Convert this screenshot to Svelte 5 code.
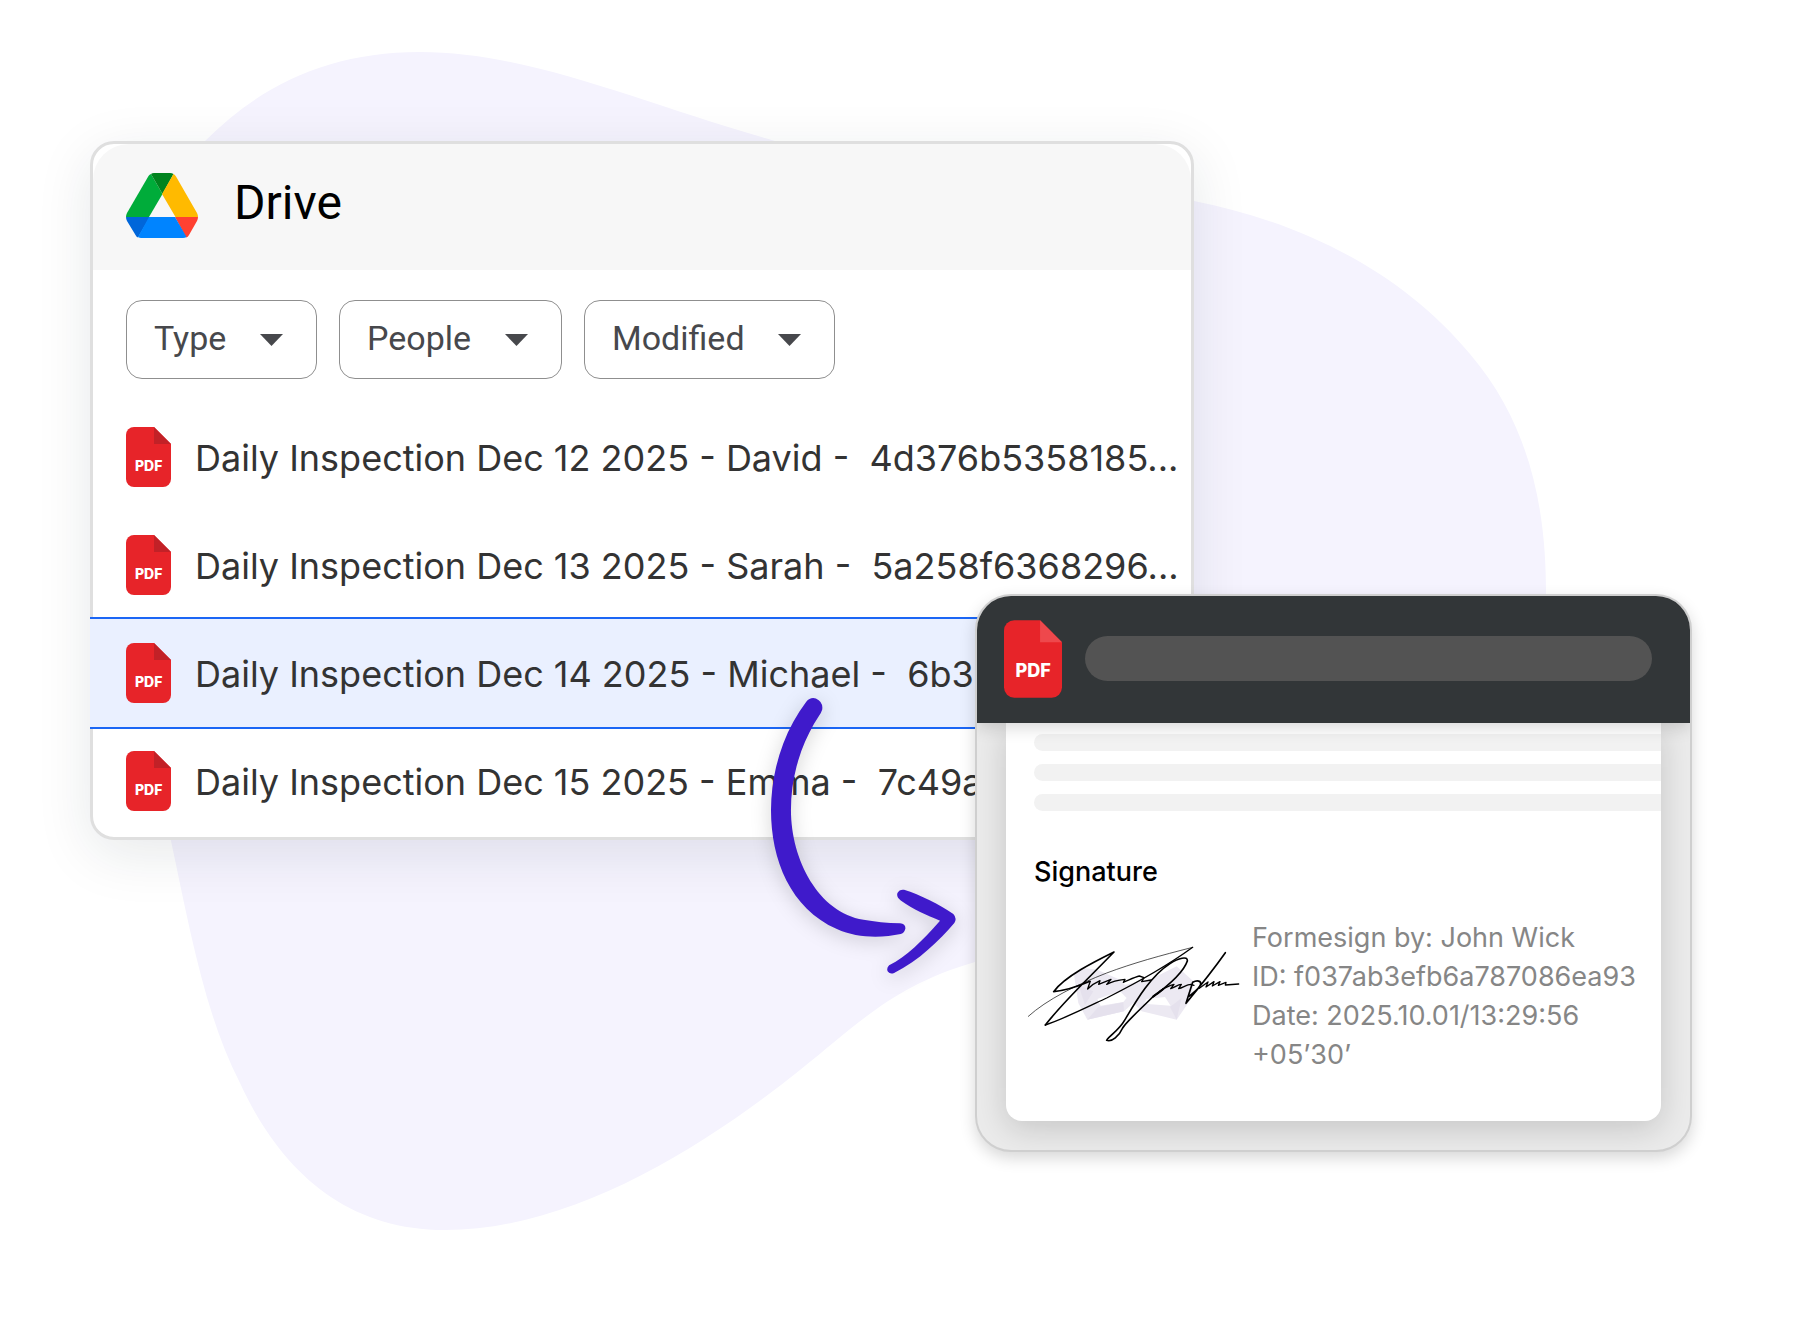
<script>
  const filters = ['Type', 'People', 'Modified'];
  const files = [
    { name: 'Daily Inspection Dec 12 2025 - David -  4d376b5358185...' },
    { name: 'Daily Inspection Dec 13 2025 - Sarah -  5a258f6368296...' },
    { name: 'Daily Inspection Dec 14 2025 - Michael -  6b3', selected: true },
    { name: 'Daily Inspection Dec 15 2025 - Emma -  7c49a' }
  ];
  const details = [
    'Formesign by: John Wick',
    'ID: f037ab3efb6a787086ea93',
    'Date: 2025.10.01/13:29:56',
    '+05’30’'
  ];
</script>

{#snippet pdf(kind)}
  <svg class="pdf {kind}" viewBox="0 0 45 60" role="img" aria-label="PDF file">
    <path fill="#e72429" d="M8 0H28L45 17V52a8 8 0 0 1-8 8H8a8 8 0 0 1-8-8V8a8 8 0 0 1 8-8Z" />
    <path class="fold" d="M28 0V17H45Z" />
    <text x="22.7" y="44.3" text-anchor="middle">PDF</text>
  </svg>
{/snippet}

<main>
  <svg class="blob" viewBox="0 0 1800 1335" aria-hidden="true">
    <path
      fill="#f5f3fe"
      d="M420 52C330 52 262 84 205 141C130 215 130 400 140 600C148 700 156 760 171 841C190 930 205 1015 240 1083C280 1170 345 1230 445 1230C570 1230 700 1150 800 1070C860 1022 895 985 975 962C1100 925 1250 900 1380 800C1500 700 1546 640 1546 594C1546 520 1535 430 1470 354C1400 270 1300 222 1194 201C1050 190 900 175 775 141C640 103 530 52 420 52Z"
    />
  </svg>

  <section class="drive">
    <header>
      <svg class="logo" viewBox="0 0 72 65" role="img" aria-label="Drive logo">
        <path fill="#0066da" d="M0 44H24L12 64.500Q10.500 64 9.500 62L1 48Q0 46 0 44Z" />
        <path fill="#00ac3a" d="M36.500 21L25 1Q23.500 1.500 22.500 3L1 40Q0 42 0 44H23Z" />
        <path fill="#ff4131" d="M60 64.500Q62 64 63 62L71 48Q72 46 72 44H49Z" />
        <path fill="#00831e" d="M36.500 21L47.500 1Q46 0 44 0H28Q26 0 25 1Z" />
        <path fill="#0084ff" d="M49 44H23L12 64Q13.500 65 15 65H57Q59 65 60.500 64Z" />
        <path fill="#ffba00" d="M71 40L50 3.500Q49 1.500 47.500 1L36 21L49.500 44H72Q72 42 71 40Z" />
      </svg>
      <h1>Drive</h1>
    </header>

    <div class="filters">
      {#each filters as filter}
        <div class="filter">
          <select aria-label={filter}>
            <option>{filter}</option>
          </select>
          <svg viewBox="0 0 23 12" aria-hidden="true"><path fill="#47484c" d="M0 0H23L11.500 12Z" /></svg>
        </div>
      {/each}
    </div>

    <ul>
      {#each files as file}
        <li class:selected={file.selected}>
          <a href="#file">{@render pdf('small')}<span>{file.name}</span></a>
        </li>
      {/each}
    </ul>
  </section>

  <div class="preview-wrap">
    <section class="preview">
      <header>
        {@render pdf('large')}
        <div class="title-bar"></div>
      </header>
      <div class="body">
        <article>
          <div class="line"></div>
          <div class="line"></div>
          <div class="line"></div>
          <h2>Signature</h2>
          <div class="signed">
            <svg class="signature" viewBox="48 70 642 306" role="img" aria-label="Handwritten signature">
              <g fill="#ece9f2">
                <path d="M192 165L215 144L262 150L330 180L345 196L385 185L430 175L500 140L550 185L545 235L500 300L395 275L370 250L342 275L232 300L205 250Z" />
              </g>
              <path fill="#fff" d="M272 258L262 238L330 215L350 235L340 247ZM402 252L410 238L465 232L482 258Z" />
              <path fill="#e5e1ed" d="M265 262L340 248L342 275L232 300ZM480 262L500 300L515 235ZM205 195L250 215L225 255Z" />
              <g fill="none" stroke="#000" stroke-linejoin="round" stroke-linecap="round">
                <path stroke-width="2" d="M55 290C110 240 200 195 290 160C370 130 450 108 548 83" />
                <path stroke-width="4" d="M548 83C470 140 380 190 290 235C220 268 160 298 106 316" />
                <path stroke-width="5" d="M106 316C150 260 205 205 250 160L312 97C255 125 165 170 131 216C165 213 205 200 240 185" />
                <path stroke-width="4" d="M240 187L233 208C244 197 256 189 270 183L266 194L303 179L290 194C305 186 325 181 345 179L340 188C355 182 375 172 388 169L402 174L395 186L424 181" />
                <path stroke-width="5" d="M428 232C465 205 520 160 532 124C534 108 505 115 480 132C420 170 375 250 345 300C325 335 300 345 290 362C305 368 328 348 338 325C350 305 390 270 428 232" />
                <path stroke-width="6" d="M430 230L460 208L442 222" />
                <path stroke-width="4" d="M450 214C462 206 480 197 492 194L482 207C494 203 504 194 514 194L506 207C518 204 532 194 542 194L552 197" />
                <path stroke-width="5" d="M646 99C610 150 570 200 528 251L548 188C562 180 574 184 572 194C568 208 550 219 538 229" />
                <path stroke-width="4" d="M568 206L594 187L588 202L612 186L607 199L630 186L625 197L648 188L646 196L686 193" />
              </g>
            </svg>
            <p>
              {#each details as detail}
                <span>{detail}</span>
              {/each}
            </p>
          </div>
        </article>
      </div>
    </section>

    <svg class="arrow" viewBox="80 100 580 860" aria-hidden="true">
      <path
        fill="#3f1acb"
        d="M198 125Q210 110 227 115Q249 125 246 148Q243 158 236 168C185 245 152 345 152 450C152 600 235 758 370 780Q420 789 480 791Q496 792 496 806Q494 820 482 823C425 835 350 836 290 808C150 745 92 600 92 450C93 330 130 215 198 125Z"
      />
      <path
        fill="#3f1acb"
        d="M492 690C540 705 600 735 640 763Q652 776 643 790C600 840 535 905 462 940Q450 945 443 936Q438 926 447 917C500 890 545 845 600 783C560 765 520 750 482 722Q468 712 472 700Q478 688 492 690Z"
      />
    </svg>
  </div>
</main>

<style>
  :global(body) {
    margin: 0;
    background: #fff;
  }

  main {
    position: relative;
    box-sizing: border-box;
    min-height: 100vh;
    padding: 141px 0;
    display: grid;
    grid-template-columns: 90fr 885fr 219fr 498fr 108fr;
    align-items: start;
    overflow: hidden;
    font-family: Inter, 'Liberation Sans', sans-serif;
  }

  .blob {
    position: absolute;
    top: 0;
    left: 0;
    width: 100%;
  }

  h1,
  h2,
  p,
  ul {
    margin: 0;
    padding: 0;
  }

  .drive {
    position: relative;
    grid-area: 1 / 2 / 2 / 4;
    min-width: 0;
    border: 3px solid #dfdfdf;
    border-radius: 24px;
    background: #fff;
    box-shadow: 0 14px 56px rgba(20, 40, 50, 0.1);
  }

  .drive header {
    display: flex;
    box-sizing: border-box;
    align-items: center;
    gap: 36px;
    height: 126px;
    padding: 0 33px 4px;
    border-radius: 36px 36px 0 0;
    background: #f7f7f7;
  }

  .logo {
    width: 72px;
    height: 65px;
  }

  h1 {
    font: 400 48px/64px Roboto, sans-serif;
    padding-bottom: 4px;
    color: #000;
  }

  .filters {
    display: flex;
    gap: 22px;
    padding: 30px 33px 24px;
  }

  .filter {
    position: relative;
  }

  select {
    appearance: none;
    box-sizing: border-box;
    height: 79px;
    margin: 0;
    padding: 0 89px 4px 27px;
    border: 1px solid #8f8f8f;
    border-radius: 16px;
    background: #fff;
    color: #47484c;
    font: 400 34px/40px Roboto, sans-serif;
  }

  .filter svg {
    position: absolute;
    right: 34px;
    top: 34px;
    width: 23px;
    height: 12px;
    pointer-events: none;
  }

  ul {
    list-style: none;
    padding-bottom: 2px;
  }

  li {
    height: 108px;
  }

  li.selected {
    position: relative;
    margin: -2px 0 -2px -3px;
    padding-left: 3px;
    border: solid #1b66f5;
    border-width: 2px 0;
    background: #eaf0ff;
  }

  li a {
    display: flex;
    align-items: center;
    gap: 24px;
    height: 100%;
    padding-left: 33px;
    color: #333;
    font-size: 36px;
    line-height: 48px;
    text-decoration: none;
    white-space: pre;
  }

  li span {
    padding-top: 2px;
  }

  .pdf {
    flex: none;
  }

  .pdf text {
    fill: #fff;
    font: 800 14px Inter, sans-serif;
  }

  .small {
    width: 45px;
    height: 60px;
  }

  .small .fold {
    fill: #c22127;
  }

  .large {
    width: 58px;
    height: 78px;
  }

  .large .fold {
    fill: #ee484c;
  }

  .preview-wrap {
    position: relative;
    grid-area: 1 / 3 / 2 / 5;
    margin-top: 453px;
  }

  .preview {
    border: 2px solid #cfcfcf;
    border-radius: 36px;
    overflow: hidden;
    background: #ebebeb;
    box-shadow: 0 6px 16px rgba(0, 0, 0, 0.16);
  }

  .preview header {
    position: relative;
    display: flex;
    box-sizing: border-box;
    align-items: center;
    gap: 23px;
    height: 127px;
    padding: 0 38px 2px 27px;
    background: #323638;
    box-shadow: 0 4px 16px rgba(0, 0, 0, 0.16);
  }

  .title-bar {
    flex: 1;
    height: 45px;
    border-radius: 23px;
    background: #535353;
  }

  .body {
    padding: 0 29px 29px;
  }

  article {
    height: 387px;
    padding: 11px 0 0 28px;
    border-radius: 0 0 16px 16px;
    background: #fff;
    box-shadow: 0 8px 32px rgba(0, 0, 0, 0.16);
  }

  .line {
    height: 17px;
    margin-bottom: 13px;
    border-radius: 9px 0 0 9px;
    background: #f2f2f2;
  }

  h2 {
    padding-top: 32px;
    color: #000;
    font-size: 27px;
    font-weight: 500;
    line-height: 32px;
  }

  .signed {
    display: flex;
    align-items: flex-start;
    gap: 12px;
    margin: 30px 0 0 -8px;
  }

  .signature {
    flex: none;
    width: 214px;
    height: 102px;
    margin-top: 25px;
  }

  p span {
    display: block;
    color: #868686;
    font-size: 27px;
    line-height: 39px;
    white-space: nowrap;
  }

  .arrow {
    position: absolute;
    top: 99px;
    right: calc(100% + 15px);
    width: 193px;
    height: 287px;
    overflow: visible;
    filter: drop-shadow(0 4px 10px rgba(0, 0, 0, 0.16));
    pointer-events: none;
  }
</style>
